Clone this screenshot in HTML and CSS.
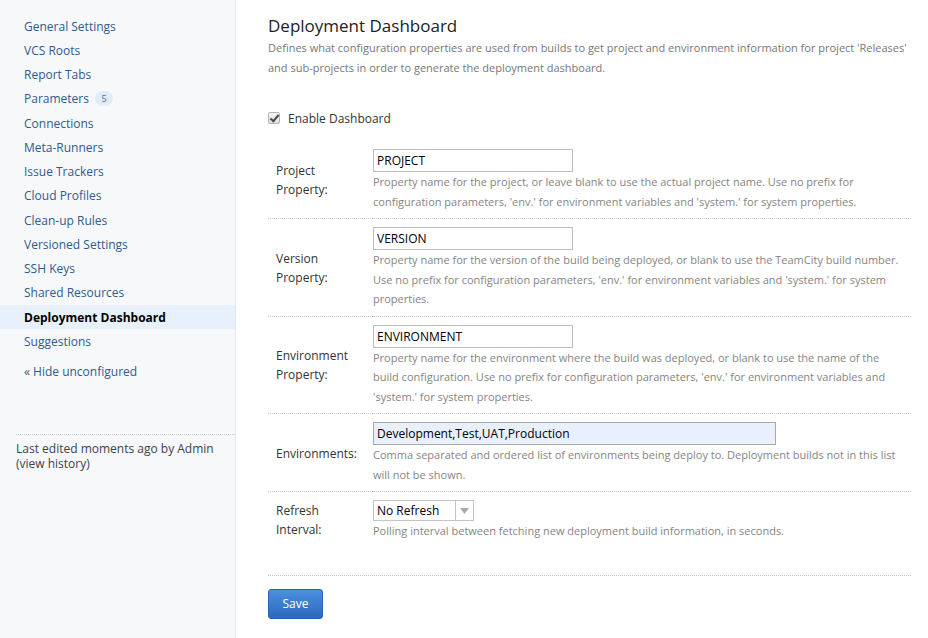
FILE: index.html
```html
<!DOCTYPE html>
<html>
<head>
<meta charset="utf-8">
<title>Deployment Dashboard</title>
<link rel="stylesheet" href="styles.css">
</head>
<body>
<div class="page">
  <aside class="sidebar">
    <nav class="nav">
      <a class="nav-item" href="#">General Settings</a>
      <a class="nav-item" href="#">VCS Roots</a>
      <a class="nav-item" href="#">Report Tabs</a>
      <a class="nav-item" href="#">Parameters <span class="badge">5</span></a>
      <a class="nav-item" href="#">Connections</a>
      <a class="nav-item" href="#">Meta-Runners</a>
      <a class="nav-item" href="#">Issue Trackers</a>
      <a class="nav-item" href="#">Cloud Profiles</a>
      <a class="nav-item" href="#">Clean-up Rules</a>
      <a class="nav-item" href="#">Versioned Settings</a>
      <a class="nav-item" href="#">SSH Keys</a>
      <a class="nav-item" href="#">Shared Resources</a>
      <a class="nav-item active" href="#">Deployment Dashboard</a>
      <a class="nav-item" href="#">Suggestions</a>
      <a class="nav-item toggle" href="#">« Hide unconfigured</a>
    </nav>
    <div class="edited">Last edited moments ago by Admin <a class="history" href="#">(view history)</a></div>
  </aside>
  <main class="content">
    <h1 class="title">Deployment Dashboard</h1>
    <p class="intro">Defines what configuration properties are used from builds to get project and environment information for project 'Releases' and sub-projects in order to generate the deployment dashboard.</p>
    <label class="enable"><input type="checkbox" class="check" checked> Enable Dashboard</label>
    <table class="form">
      <colgroup><col class="col-label"><col class="col-field"></colgroup>
      <tr class="row">
        <th class="label">Project Property:</th>
        <td class="field">
          <input class="text" type="text" value="PROJECT">
          <div class="note">Property name for the project, or leave blank to use the actual project name. Use no prefix for configuration parameters, 'env.' for environment variables and 'system.' for system properties.</div>
        </td>
      </tr>
      <tr class="row">
        <th class="label">Version Property:</th>
        <td class="field">
          <input class="text" type="text" value="VERSION">
          <div class="note">Property name for the version of the build being deployed, or blank to use the TeamCity build number. Use no prefix for configuration parameters, 'env.' for environment variables and 'system.' for system properties.</div>
        </td>
      </tr>
      <tr class="row">
        <th class="label">Environment Property:</th>
        <td class="field">
          <input class="text" type="text" value="ENVIRONMENT">
          <div class="note">Property name for the environment where the build was deployed, or blank to use the name of the build configuration. Use no prefix for configuration parameters, 'env.' for environment variables and 'system.' for system properties.</div>
        </td>
      </tr>
      <tr class="row">
        <th class="label">Environments:</th>
        <td class="field">
          <input class="text wide" type="text" value="Development,Test,UAT,Production">
          <div class="note">Comma separated and ordered list of environments being deploy to. Deployment builds not in this list will not be shown.</div>
        </td>
      </tr>
      <tr class="row last">
        <th class="label">Refresh Interval:</th>
        <td class="field">
          <div class="select"><span class="select-value">No Refresh</span><span class="select-btn"><svg width="9" height="6" viewBox="0 0 9 6"><path d="M0 0h9L4.5 6z" fill="#a9a9a9"/></svg></span></div>
          <div class="note">Polling interval between fetching new deployment build information, in seconds.</div>
        </td>
      </tr>
    </table>
    <div class="actions">
      <button class="save" type="button">Save</button>
    </div>
  </main>
</div>
</body>
</html>
```
FILE: styles.css
```css
html, body {
  margin: 0;
  padding: 0;
  background: #ffffff;
}
body {
  font-family: "Open Sans", "Noto Sans", sans-serif;
  color: #333;
}
.page {
  display: flex;
  min-height: 638px;
}
.sidebar {
  width: 236px;
  flex: none;
  background: #f7f8fa;
  border-right: 1px solid #e6e8eb;
  box-sizing: border-box;
}
.nav {
  display: flex;
  flex-direction: column;
  padding-top: 14px;
}
.nav-item {
  display: flex;
  align-items: center;
  height: 24.25px;
  padding-left: 24px;
  font-size: 12px;
  color: #2f5a8f;
  text-decoration: none;
  white-space: nowrap;
}
.nav-item.active {
  background: #e8f1fb;
  color: #000;
  font-weight: 700;
}
.nav-item.toggle {
  margin-top: 6px;
}
.badge {
  display: inline-flex;
  align-items: center;
  justify-content: center;
  margin-left: 6px;
  width: 18px;
  height: 15px;
  border-radius: 8px;
  background: #e2ebf6;
  color: #3f6ea6;
  font-size: 9px;
}
.edited {
  margin: 50px 0 0 16px;
  padding-top: 6px;
  border-top: 1px dotted #c9ccd1;
  font-size: 12px;
  line-height: 15.5px;
  color: #3b4250;
}
.history {
  color: #3b4250;
  text-decoration: none;
}
.content {
  flex: 1;
  padding: 14px 17px 0 32px;
}
.title {
  margin: 0;
  font-size: 17px;
  line-height: 24px;
  font-weight: 400;
  color: #222;
}
.intro {
  margin: 0;
  font-size: 11px;
  line-height: 20px;
  color: #777;
}
.enable {
  display: flex;
  align-items: center;
  margin-top: 30px;
  height: 20px;
  font-size: 12px;
  color: #333;
}
.check {
  appearance: none;
  -webkit-appearance: none;
  width: 12px;
  height: 12px;
  margin: 0 8px 0 0;
  border: 1px solid #b4b4b4;
  border-radius: 2px;
  background: linear-gradient(#f4f4f4, #e2e2e2);
  position: relative;
  box-sizing: border-box;
}
.check::after {
  content: "";
  position: absolute;
  left: 3px;
  top: 0px;
  width: 3px;
  height: 7px;
  border: solid #4a4a4a;
  border-width: 0 2px 2px 0;
  transform: rotate(40deg);
}
.form {
  width: 643px;
  margin-top: 13px;
  border-collapse: collapse;
  table-layout: fixed;
}
.col-label {
  width: 105px;
}
.row {
  border-bottom: 1px dotted #c8c8c8;
}
.row.last {
  border-bottom: none;
}
.label {
  padding: 8px 6px 7px 8px;
  text-align: left;
  vertical-align: middle;
  font-weight: 400;
  font-size: 12px;
  line-height: 19px;
  color: #333;
}
.field {
  padding: 8px 0 7px 0;
  vertical-align: top;
}
.text {
  display: block;
  box-sizing: border-box;
  width: 200px;
  height: 23px;
  margin: 0;
  padding: 0 3px;
  border: 1px solid #bdbdbd;
  font-family: "Open Sans", "Noto Sans", sans-serif;
  font-size: 12px;
  color: #000;
  background: #fff;
  outline: none;
}
.text.wide {
  width: 403px;
  background: #e8f0fe;
  border-color: #a9a9a9;
}
.note {
  padding-right: 10px;
  font-size: 11px;
  line-height: 19.5px;
  color: #858585;
}
.select {
  display: flex;
  box-sizing: border-box;
  width: 101px;
  height: 21px;
  border: 1px solid #c4c4c4;
  background: #fff;
}
.select-value {
  flex: 1;
  display: flex;
  align-items: center;
  padding-left: 3px;
  font-size: 12px;
  color: #000;
}
.select-btn {
  width: 17px;
  display: flex;
  align-items: center;
  justify-content: center;
  border-left: 1px solid #c4c4c4;
}
.actions {
  margin-top: 27px;
  padding-top: 13px;
  border-top: 1px dotted #c8c8c8;
  width: 643px;
}
.save {
  width: 55px;
  height: 30px;
  border: 1px solid #2a62b0;
  border-radius: 3px;
  background: linear-gradient(#4b90dc, #2c68bf);
  color: #fff;
  font-family: "Open Sans", "Noto Sans", sans-serif;
  font-size: 12px;
  padding: 0;
}
```
